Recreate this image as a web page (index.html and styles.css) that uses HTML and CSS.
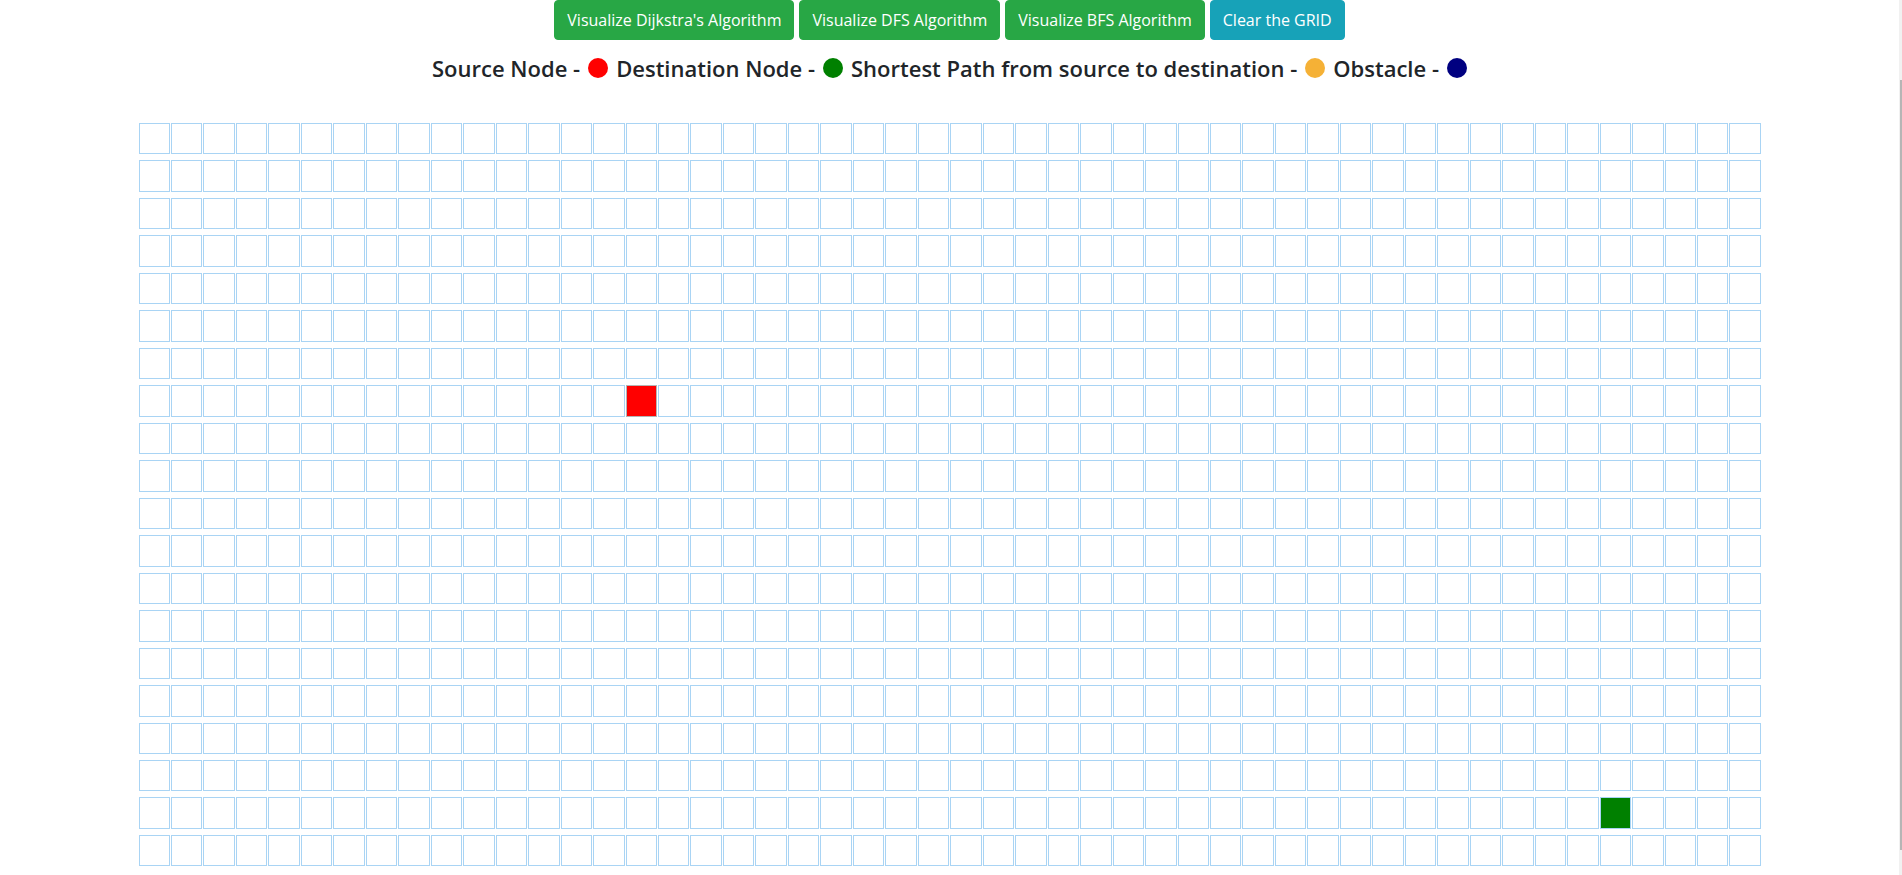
FILE: index.html
```html
<!DOCTYPE html>
<html lang="en">
<head>
<meta charset="utf-8">
<title>Pathfinding Visualizer</title>
<link rel="stylesheet" href="styles.css">
</head>
<body>
<div class="page">
  <div class="toolbar">
    <button class="btn btn-success">Visualize Dijkstra's Algorithm</button>
    <button class="btn btn-success">Visualize DFS Algorithm</button>
    <button class="btn btn-success">Visualize BFS Algorithm</button>
    <button class="btn btn-info">Clear the GRID</button>
  </div>
  <h4 class="legend">
    <span>Source Node -</span><span class="dot dot-red"></span>
    <span>Destination Node -</span><span class="dot dot-green"></span>
    <span>Shortest Path from source to destination -</span><span class="dot dot-orange"></span>
    <span>Obstacle -</span><span class="dot dot-navy"></span>
  </h4>
  <div class="grid" id="grid"></div>
</div>
<div class="scrollbar"><div class="thumb"></div></div>
<script src="script.js"></script>
</body>
</html>
```
FILE: styles.css
```css
html, body {
  margin: 0;
  padding: 0;
  overflow: hidden;
  background: #fff;
}
body {
  font-family: "Open Sans", "Noto Sans", sans-serif;
  color: #212529;
}
.page {
  width: 1899px;
}
.toolbar {
  display: flex;
  justify-content: center;
  gap: 5px;
}
.btn {
  font-family: "Open Sans", "Noto Sans", sans-serif;
  font-size: 16px;
  line-height: 24px;
  padding: 7px 12px;
  border: 1px solid transparent;
  border-radius: 4px;
  color: #fff;
  cursor: pointer;
}
.btn-success {
  background: #28a745;
  border-color: #28a745;
}
.btn-info {
  background: #17a2b8;
  border-color: #17a2b8;
}
.legend {
  margin: 15px 0 0;
  height: 26px;
  display: flex;
  justify-content: center;
  align-items: center;
  gap: 8px;
  font-size: 22px;
  font-weight: 600;
  line-height: 26px;
  color: #212529;
}
.dot {
  width: 20px;
  height: 20px;
  border-radius: 50%;
  flex: none;
}
.dot-red { background: #ff0000; }
.dot-green { background: #008000; }
.dot-orange { background: #f5b136; }
.dot-navy { background: #000080; }
.grid {
  width: 1622px;
  margin: 42px auto 0;
  display: grid;
  grid-template-columns: repeat(50, 1fr);
  column-gap: 1px;
  row-gap: 6px;
}
.cell {
  aspect-ratio: 1;
  box-sizing: border-box;
  border: 1px solid #a9d4f4;
  background: #fff;
}
.cell.start {
  background: #ff0000;
  border-color: #b4b4b4;
}
.cell.end {
  background: #008000;
  border-color: #a9d4f4;
}
.scrollbar {
  position: fixed;
  top: 0;
  right: 0;
  width: 3px;
  height: 100%;
  background: #f1f1f1;
}
.thumb {
  margin-top: 80px;
  margin-left: 1px;
  width: 2px;
  height: 770px;
  background: #b5b5b5;
}
```
FILE: script.js
```js
(function () {
  var grid = document.getElementById('grid');
  var rows = 20, cols = 50;
  var frag = document.createDocumentFragment();
  for (var r = 0; r < rows; r++) {
    for (var c = 0; c < cols; c++) {
      var d = document.createElement('div');
      d.className = 'cell';
      if (r === 7 && c === 15) d.className += ' start';
      if (r === 18 && c === 45) d.className += ' end';
      frag.appendChild(d);
    }
  }
  grid.appendChild(frag);
})();
```
